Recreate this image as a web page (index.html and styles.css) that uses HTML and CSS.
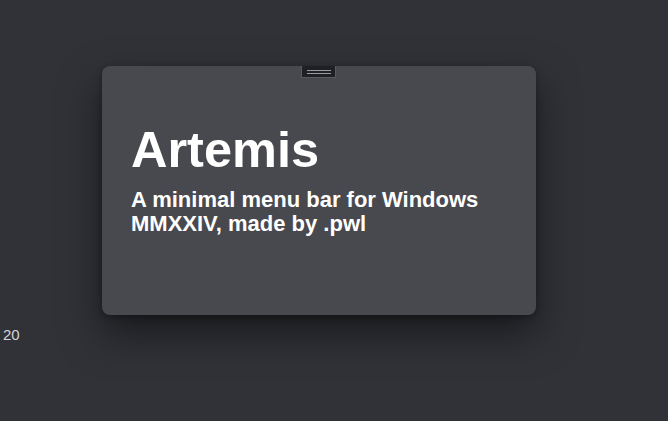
FILE: index.html
```html
<!DOCTYPE html>
<html lang="en">
  <head>
    <meta charset="UTF-8" />
    <meta name="viewport" content="width=device-width, initial-scale=1.0" />
    <title>Artemis</title>
    <link rel="stylesheet" href="styles.css">
  </head>
  <body>
    <div class="stage">
      <div class="card">
        <div class="handle"><span></span><span></span></div>
        <h1 class="title">Artemis</h1>
        <p class="tagline">A minimal menu bar for Windows MMXXIV, made by .pwl</p>
      </div>
    </div>
    <div class="count">20</div>
  </body>
</html>
```

FILE: styles.css
```css
html,
body {
  margin: 0;
  height: 100%;
}
body {
  background-color: #313238;
  font-family: "Liberation Sans", Arial, sans-serif;
  color: #fff;
  overflow: hidden;
}
.stage {
  padding: 66px 0 0 102px;
}
.card {
  width: 434px;
  height: 249px;
  box-sizing: border-box;
  padding: 0 29px;
  background-color: #48494e;
  border-radius: 8px;
  box-shadow: 0 18px 40px rgba(0, 0, 0, 0.5), 0 2px 6px rgba(0, 0, 0, 0.3);
  position: relative;
  overflow: hidden;
}
.handle {
  position: absolute;
  top: 0;
  left: 199px;
  width: 35px;
  height: 12px;
  box-sizing: border-box;
  background-color: #1f2023;
  border: 1px solid #5a5b60;
  border-top: none;
  display: flex;
  flex-direction: column;
  align-items: center;
  justify-content: center;
  gap: 2px;
}
.handle span {
  display: block;
  width: 24px;
  height: 1px;
  background-color: #9a9ba0;
}
.title {
  margin: 55px 0 0;
  font-size: 50.5px;
  line-height: 1.15;
  font-weight: bold;
}
.tagline {
  margin: 9px 0 0;
  width: 360px;
  font-size: 22px;
  line-height: 24px;
  font-weight: bold;
}
.count {
  margin: 11px 0 0 3px;
  font-size: 15px;
  color: #d4d5d9;
}
```
